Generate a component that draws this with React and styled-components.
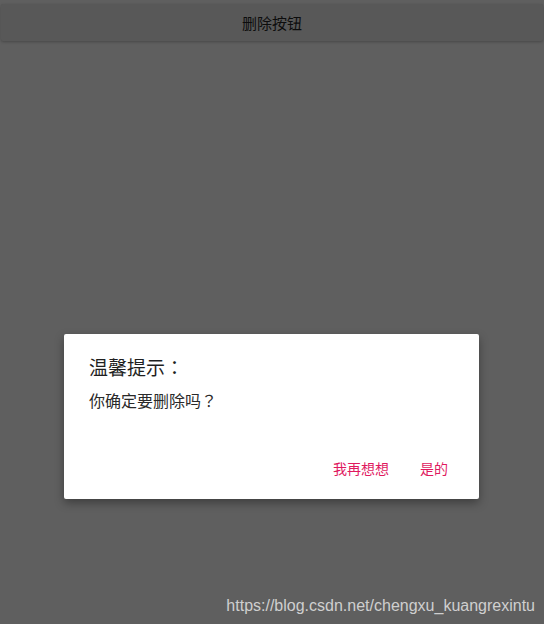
import React from 'react'
import styled, { createGlobalStyle } from 'styled-components'

const GlobalStyle = createGlobalStyle`
  html, body {
    margin: 0;
    padding: 0;
    background: #5f5f5f;
  }
  body {
    font-family: "Noto Sans CJK SC", Roboto, sans-serif;
  }
`

const Page = styled.div`
  height: 624px;
  display: flex;
  flex-direction: column;
  background: #5f5f5f;
  overflow: hidden;
`

const TitleBar = styled.div`
  margin: 4px 1px 0;
  height: 37px;
  border-radius: 2px;
  background: #585858;
  box-shadow: 0 1px 3px rgba(0, 0, 0, 0.25);
  display: flex;
  align-items: center;
  justify-content: center;
  font-size: 15px;
  color: #0d0d0d;
`

const Dialog = styled.div`
  margin: 293px 0 0 64px;
  width: 415px;
  height: 165px;
  box-sizing: border-box;
  background: #fff;
  border-radius: 2px;
  box-shadow: 0 4px 10px rgba(0, 0, 0, 0.35);
  padding: 20px 24px 0 25px;
  display: flex;
  flex-direction: column;
`

// centred full-width punctuation, as on the device
const Punct = styled.span`
  font-family: "Noto Sans CJK JP", sans-serif;
`

const DialogTitle = styled.div`
  font-size: 19px;
  line-height: 26px;
  color: #1f1f1f;
`

const DialogText = styled.div`
  margin-top: 9px;
  font-size: 16px;
  line-height: 22px;
  color: #2a2a2a;
`

const Actions = styled.div`
  margin-top: 47px;
  display: flex;
  justify-content: flex-end;
  gap: 31px;
  padding-right: 7px;
`

const ActionButton = styled.button`
  border: none;
  background: none;
  padding: 0;
  font-family: inherit;
  font-size: 14px;
  line-height: 20px;
  color: #e0195f;
`

const Watermark = styled.div`
  margin-top: auto;
  align-self: flex-end;
  padding: 0 9px 9px 0;
  font-family: "Liberation Sans", Arial, sans-serif;
  font-size: 16px;
  color: #cfcfcf;
`

export default function App() {
  return (
    <Page>
      <GlobalStyle />
      <TitleBar>删除按钮</TitleBar>
      <Dialog>
        <DialogTitle>温馨提示<Punct>：</Punct></DialogTitle>
        <DialogText>你确定要删除吗<Punct>？</Punct></DialogText>
        <Actions>
          <ActionButton>我再想想</ActionButton>
          <ActionButton>是的</ActionButton>
        </Actions>
      </Dialog>
      <Watermark>https://blog.csdn.net/chengxu_kuangrexintu</Watermark>
    </Page>
  )
}
